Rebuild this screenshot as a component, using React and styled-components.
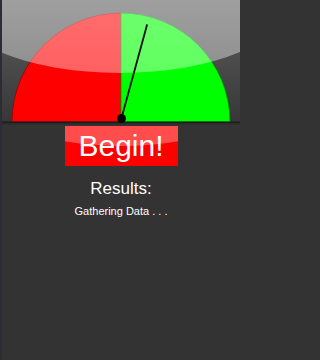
import React from "react";
import styled, { createGlobalStyle } from "styled-components";

const GlobalStyle = createGlobalStyle`
  html, body {
    margin: 0;
    padding: 0;
    background: #333333;
  }
`;

const Screen = styled.div`
  width: 240px;
  height: 360px;
  box-sizing: border-box;
  border-left: 2px solid #2c2c36;
  background: #333333;
  display: flex;
  flex-direction: column;
  align-items: center;
  font-family: "Liberation Sans", Arial, sans-serif;
  color: #ffffff;
  overflow: hidden;
`;

const GaugeArt = styled.svg`
  display: block;
  flex-shrink: 0;
`;

const BeginButton = styled.button`
  position: relative;
  width: 113px;
  height: 40px;
  margin: 1px 0 0;
  padding: 0;
  border: none;
  background: #ff0000;
  color: #ffffff;
  font-family: "Liberation Sans", Arial, sans-serif;
  font-size: 30px;
  line-height: 40px;
  overflow: hidden;
  cursor: pointer;

  &::before {
    content: "";
    position: absolute;
    left: -40px;
    right: -40px;
    top: -30px;
    height: 50px;
    border-radius: 50%;
    background: rgba(255, 255, 255, 0.3);
  }

  span {
    position: relative;
  }
`;

const Title = styled.div`
  margin-top: 13px;
  font-size: 17px;
  line-height: 19px;
`;

const Status = styled.div`
  margin-top: 7px;
  font-size: 11px;
  line-height: 13px;
`;

const Gauge = () => {
  const cx = 121;
  const cy = 122;
  const r = 109;
  return (
    <GaugeArt width="238" height="125" viewBox="2 0 238 125">
      <defs>
        <linearGradient id="panel" x1="0" y1="0" x2="0" y2="1">
          <stop offset="0" stopColor="#575757" />
          <stop offset="0.45" stopColor="#4d4d4d" />
          <stop offset="1" stopColor="#363636" />
        </linearGradient>
        <linearGradient id="gloss" x1="0" y1="0" x2="0" y2="1">
          <stop offset="0" stopColor="#ffffff" stopOpacity="0.48" />
          <stop offset="1" stopColor="#ffffff" stopOpacity="0.38" />
        </linearGradient>
      </defs>
      <rect x="0" y="0" width="240" height="125" fill="url(#panel)" />
      <path
        d={`M ${cx} ${cy} L ${cx - r} ${cy} A ${r} ${r} 0 0 1 ${cx} ${cy - r} Z`}
        fill="#ff0000"
        stroke="#9a0000"
        strokeWidth="0.8"
      />
      <path
        d={`M ${cx} ${cy} L ${cx} ${cy - r} A ${r} ${r} 0 0 1 ${cx + r} ${cy} Z`}
        fill="#00ff00"
        stroke="#009a00"
        strokeWidth="0.8"
      />
      <ellipse cx="120" cy="0" rx="171" ry="73" fill="url(#gloss)" />
      <rect x="0" y="121.5" width="240" height="2" fill="#1c1c1c" />
      <rect x="0" y="123.5" width="240" height="1.5" fill="#2e2e2e" />
      <line x1="121.5" y1="118" x2="147" y2="25" stroke="#111111" strokeWidth="1.8" strokeLinecap="round" />
      <circle cx="121.5" cy="118.5" r="4.5" fill="#000000" />
    </GaugeArt>
  );
};

const App = () => (
  <>
    <GlobalStyle />
    <Screen>
      <Gauge />
      <BeginButton>
        <span>Begin!</span>
      </BeginButton>
      <Title>Results:</Title>
      <Status>Gathering Data . . .</Status>
    </Screen>
  </>
);

export default App;
